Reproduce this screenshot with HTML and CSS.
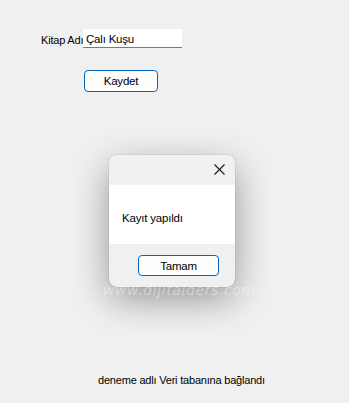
FILE: index.html
```html
<!doctype html>
<html lang="tr">

<head>
    <meta charset="utf-8">
    <title>Kitap</title>
    <link rel="stylesheet" href="styles.css">
</head>

<body>
    <div class="form-row">
        <span class="label">Kitap Adı</span>
        <div class="textbox">Çalı Kuşu</div>
    </div>
    <div class="save-row">
        <button class="button">Kaydet</button>
    </div>

    <div class="dialog">
        <div class="dialog__title">
            <svg class="dialog__close" width="11" height="11" viewBox="0 0 11 11">
                <path d="M0.5 0.5 L10.5 10.5 M10.5 0.5 L0.5 10.5" stroke="#1a1a1a" stroke-width="1.1" fill="none" />
            </svg>
        </div>
        <div class="dialog__body">Kayıt yapıldı</div>
        <div class="dialog__footer">
            <button class="button button--dialog">Tamam</button>
        </div>
        <div class="watermark">www.dijitalders.com</div>
    </div>

    <p class="status">deneme adlı Veri tabanına bağlandı</p>
</body>

</html>
```

FILE: styles.css
```css
* {
    box-sizing: border-box;
    margin: 0;
}

body {
    background: #f0f0f0;
    font-family: "Liberation Sans", Arial, sans-serif;
    font-size: 11px;
    letter-spacing: -0.2px;
    color: #000;
    height: 403px;
    overflow: hidden;
}

.form-row {
    display: flex;
    align-items: flex-end;
    padding: 29px 0 0 41px;
}

.label {
    flex-shrink: 0;
    width: 42px;
    white-space: nowrap;
    line-height: 14px;
    margin-bottom: 1px;
}

.textbox {
    width: 99px;
    height: 19px;
    background: #fff;
    border-bottom: 1px solid #7a7a7a;
    padding: 3px 0 0 3px;
    line-height: 14px;
    font-size: 11.5px;
}

.save-row {
    padding: 22px 0 0 84px;
}

.button {
    display: block;
    width: 74px;
    height: 22px;
    border: 1px solid #0067c0;
    border-radius: 4px;
    background: #fdfdfd;
    font-family: inherit;
    font-size: 11.5px;
    letter-spacing: -0.2px;
    color: #000;
    padding: 0;
}

.dialog {
    position: relative;
    width: 126px;
    height: 132px;
    margin: 63px 0 0 109px;
    border-radius: 8px;
    box-shadow: 0 12px 36px rgba(0, 0, 0, 0.38), 0 0 1px rgba(0, 0, 0, 0.45);
    background: #f0f0f0;
}

.dialog__title {
    height: 30px;
    background: #f0f1f0;
    border-radius: 8px 8px 0 0;
    display: flex;
    justify-content: flex-end;
    align-items: center;
    padding-right: 10px;
}

.dialog__close {
    display: block;
    margin-top: -1px;
}

.dialog__body {
    height: 59px;
    background: #fff;
    padding: 26px 0 0 13px;
    line-height: 14px;
    font-size: 11.5px;
}

.dialog__footer {
    height: 43px;
    display: flex;
    justify-content: flex-end;
    padding: 11px 16px 0 0;
    border-radius: 0 0 8px 8px;
}

.button--dialog {
    width: 81px;
    height: 21px;
}

.watermark {
    position: absolute;
    left: -6px;
    top: 127px;
    font-family: "DejaVu Sans", sans-serif;
    font-size: 14px;
    font-style: italic;
    letter-spacing: 0.6px;
    color: rgba(255, 255, 255, 0.4);
    white-space: nowrap;
}

.status {
    margin: 86px 0 0 98px;
    line-height: 14px;
}
```
